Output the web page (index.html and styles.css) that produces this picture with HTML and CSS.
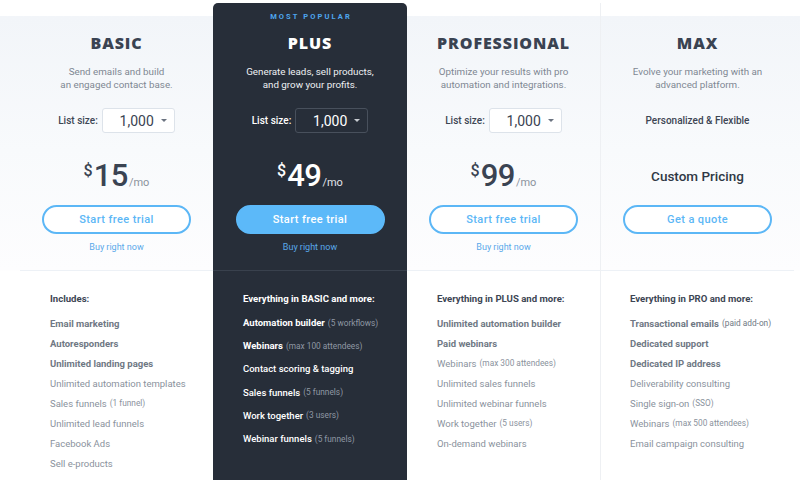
FILE: index.html
```html
<!DOCTYPE html>
<html lang="en">
<head>
<meta charset="utf-8">
<title>Pricing</title>
<link rel="stylesheet" href="styles.css">
</head>
<body>
<div class="pricing">
  <div class="plan">
    <div class="head">
      <div class="badge hidden">MOST POPULAR</div>
      <h2 class="title">BASIC</h2>
      <p class="desc">Send emails and build<br>an engaged contact base.</p>
      <div class="listrow"><span class="lbl">List size:</span><span class="select">1,000<span class="caret"></span></span></div>
      <div class="price"><span class="cur">$</span><span class="num">15</span><span class="per">/mo</span></div>
      <a class="btn">Start free trial</a>
      <a class="buy">Buy right now</a>
    </div>
    <div class="features">
      <div class="fhead">Includes:</div>
      <ul>
        <li class="b">Email marketing</li>
        <li class="b">Autoresponders</li>
        <li class="b">Unlimited landing pages</li>
        <li>Unlimited automation templates</li>
        <li>Sales funnels <small>(1 funnel)</small></li>
        <li>Unlimited lead funnels</li>
        <li>Facebook Ads</li>
        <li>Sell e-products</li>
      </ul>
    </div>
  </div>
  <div class="plan dark">
    <div class="head">
      <div class="badge">MOST POPULAR</div>
      <h2 class="title">PLUS</h2>
      <p class="desc">Generate leads, sell products,<br>and grow your profits.</p>
      <div class="listrow"><span class="lbl">List size:</span><span class="select">1,000<span class="caret"></span></span></div>
      <div class="price"><span class="cur">$</span><span class="num">49</span><span class="per">/mo</span></div>
      <a class="btn fill">Start free trial</a>
      <a class="buy">Buy right now</a>
    </div>
    <div class="features">
      <div class="fhead">Everything in BASIC and more:</div>
      <ul>
        <li class="b">Automation builder <small>(5 workflows)</small></li>
        <li class="b">Webinars <small>(max 100 attendees)</small></li>
        <li>Contact scoring &amp; tagging</li>
        <li>Sales funnels <small>(5 funnels)</small></li>
        <li>Work together <small>(3 users)</small></li>
        <li>Webinar funnels <small>(5 funnels)</small></li>
      </ul>
    </div>
  </div>
  <div class="plan">
    <div class="head">
      <div class="badge hidden">MOST POPULAR</div>
      <h2 class="title">PROFESSIONAL</h2>
      <p class="desc">Optimize your results with pro<br>automation and integrations.</p>
      <div class="listrow"><span class="lbl">List size:</span><span class="select">1,000<span class="caret"></span></span></div>
      <div class="price"><span class="cur">$</span><span class="num">99</span><span class="per">/mo</span></div>
      <a class="btn">Start free trial</a>
      <a class="buy">Buy right now</a>
    </div>
    <div class="features">
      <div class="fhead">Everything in PLUS and more:</div>
      <ul>
        <li class="b">Unlimited automation builder</li>
        <li class="b">Paid webinars</li>
        <li>Webinars <small>(max 300 attendees)</small></li>
        <li>Unlimited sales funnels</li>
        <li>Unlimited webinar funnels</li>
        <li>Work together <small>(5 users)</small></li>
        <li>On-demand webinars</li>
      </ul>
    </div>
  </div>
  <div class="plan max">
    <div class="head">
      <div class="badge hidden">MOST POPULAR</div>
      <h2 class="title">MAX</h2>
      <p class="desc">Evolve your marketing with an<br>advanced platform.</p>
      <div class="listrow"><span class="lbl">Personalized &amp; Flexible</span></div>
      <div class="price"><span class="custom">Custom Pricing</span></div>
      <a class="btn">Get a quote</a>
      <a class="buy hidden">Buy right now</a>
    </div>
    <div class="features">
      <div class="fhead">Everything in PRO and more:</div>
      <ul>
        <li class="b">Transactional emails <small>(paid add-on)</small></li>
        <li class="b">Dedicated support</li>
        <li class="b">Dedicated IP address</li>
        <li>Deliverability consulting</li>
        <li>Single sign-on <small>(SSO)</small></li>
        <li>Webinars <small>(max 500 attendees)</small></li>
        <li>Email campaign consulting</li>
      </ul>
    </div>
  </div>
</div>
</body>
</html>
```
FILE: styles.css
```css
* { box-sizing: border-box; }
html, body { margin: 0; padding: 0; }
body {
  width: 800px;
  height: 480px;
  overflow: hidden;
  font-family: Roboto, "Liberation Sans", Arial, sans-serif;
  color: #3d4654;
  background:
    linear-gradient(to bottom, #ffffff 0, #ffffff 16px, #f2f5f9 16px, #f8fafc 150px, #fdfdfe 270px, #ffffff 271px);
}
.pricing {
  display: grid;
  grid-template-columns: 193px 194px 193px 194px;
  padding: 3px 0 0 20px;
  height: 480px;
}
.plan { display: flex; flex-direction: column; }
.head {
  height: 268px;
  padding-top: 9px;
  display: flex;
  flex-direction: column;
  align-items: center;
  text-align: center;
  border-bottom: 1px solid #edf1f6;
}
.badge {
  font-size: 7.5px;
  line-height: 10px;
  font-weight: 700;
  letter-spacing: 2.1px;
  color: #4ea6ef;
  padding-left: 2px;
}
.hidden { visibility: hidden; }
.title {
  margin: 11px 0 0;
  font-family: "Open Sans", "Liberation Sans", sans-serif;
  font-size: 16px;
  line-height: 20px;
  font-weight: 800;
  letter-spacing: 0.9px;
  color: #3a4352;
}
.desc {
  margin: 12px 0 0;
  font-size: 9.8px;
  line-height: 13px;
  color: #7f8893;
}
.listrow {
  margin-top: 17px;
  height: 25px;
  display: flex;
  align-items: center;
  gap: 4px;
}
.lbl {
  font-size: 10px;
  font-weight: 500;
  color: #3d4654;
}
.select {
  width: 73px;
  height: 25px;
  border: 1px solid #dde3ea;
  border-radius: 3px;
  background: #fff;
  display: flex;
  align-items: center;
  justify-content: flex-end;
  padding-right: 7px;
  font-size: 14px;
  color: #3a4352;
}
.caret {
  margin-left: 7px;
  width: 0;
  height: 0;
  border-left: 3.5px solid transparent;
  border-right: 3.5px solid transparent;
  border-top: 3.5px solid #6b7380;
}
.price {
  margin-top: 22px;
  height: 40px;
  display: flex;
  align-items: center;
  justify-content: center;
}
.cur {
  font-size: 16px;
  font-weight: 500;
  align-self: flex-start;
  margin-top: 6px;
  margin-right: 1px;
  color: #3a4352;
}
.num {
  font-size: 31px;
  font-weight: 500;
  line-height: 40px;
  color: #3a4352;
  letter-spacing: -0.5px;
  padding-top: 2px;
}
.per {
  font-size: 11px;
  color: #8a929c;
  align-self: flex-end;
  margin-bottom: 6px;
  margin-left: 1px;
}
.custom {
  font-size: 13.5px;
  font-weight: 500;
  color: #2f3845;
  margin-top: 1px;
}
.btn {
  margin-top: 10px;
  width: 149px;
  height: 29px;
  border: 2px solid #5cb7f6;
  border-radius: 15px;
  display: flex;
  align-items: center;
  justify-content: center;
  font-size: 11px;
  font-weight: 500;
  letter-spacing: 0.4px;
  color: #5cb7f6;
  background: #fff;
}
.buy {
  margin-top: 7px;
  font-size: 9px;
  line-height: 12px;
  color: #5aa9ea;
}
.features {
  padding: 18px 0 0 30px;
}
.fhead {
  font-size: 9.6px;
  line-height: 20px;
  font-weight: 700;
  color: #3d4654;
}
ul { list-style: none; margin: 4px 0 0; padding: 0; }
li {
  display: flex;
  align-items: center;
  gap: 3px;
  height: 20px;
  font-size: 9.5px;
  color: #8a929d;
  white-space: nowrap;
}
li.b { font-weight: 700; color: #6f7884; }
li small { font-size: 8.3px; font-weight: 400; }

/* dark "Plus" card */
.dark {
  background: #272e39;
  border-radius: 5px 5px 0 0;
}
.dark .head { border-bottom-color: #39414d; }
.dark .title { color: #ffffff; }
.dark .desc { color: #eef0f3; }
.dark .lbl { color: #ffffff; }
.dark .select { background: #272e39; border-color: #48505c; color: #ffffff; }
.dark .caret { border-top-color: #c8ccd2; }
.dark .cur, .dark .num { color: #ffffff; }
.dark .per { color: #e2e5e9; }
.dark .btn.fill { background: #5cb9f9; border-color: #5cb9f9; color: #ffffff; }
.dark .buy { color: #5aa9ea; }
.dark .fhead { color: #ffffff; }
.dark ul { margin-top: 2px; }
.dark li { color: #ffffff; height: 23.2px; font-weight: 500; }
.dark li.b { color: #ffffff; font-weight: 700; }
.dark li small { color: #8f98a4; font-weight: 400; }

.max { border-left: 1px solid #eef0f3; }
.max .features { padding-left: 29px; }
```
